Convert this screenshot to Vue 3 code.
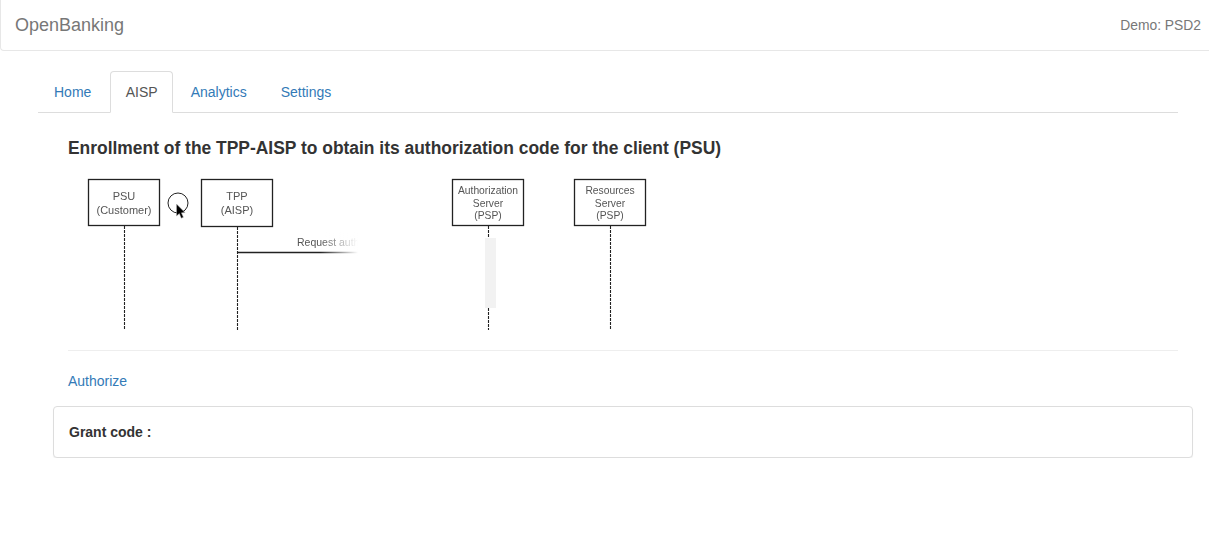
<template>
  <div class="page">
    <nav class="navbar">
      <a class="brand">OpenBanking</a>
      <span class="demo">Demo: PSD2</span>
    </nav>

    <div class="container">
      <ul class="tabs">
        <li v-for="tab in tabs" :key="tab" class="tab" :class="{ active: tab === 'AISP' }">{{ tab }}</li>
      </ul>

      <div class="tab-content">
        <h4 class="title">Enrollment of the TPP-AISP to obtain its authorization code for the client (PSU)</h4>

        <svg class="diagram" width="640" height="175" viewBox="68 165 640 175">
          <defs>
            <linearGradient id="fadeOut" gradientUnits="userSpaceOnUse" x1="320" y1="0" x2="358" y2="0">
              <stop offset="0" stop-color="#fff" stop-opacity="0" />
              <stop offset="1" stop-color="#fff" stop-opacity="1" />
            </linearGradient>
            <clipPath id="reveal">
              <rect x="230" y="230" width="128" height="30" />
            </clipPath>
          </defs>

          <rect x="485" y="238" width="11" height="70" fill="#f2f2f2" />

          <g v-for="line in lifelines" :key="line.x">
            <line
              v-for="(seg, i) in line.segments"
              :key="i"
              class="lifeline"
              :x1="line.x"
              :x2="line.x"
              :y1="seg[0]"
              :y2="seg[1]"
            />
          </g>

          <g v-for="box in boxes" :key="box.x">
            <rect class="box" :x="box.x + 0.5" y="179.5" width="71" :height="box.h" />
            <text
              v-for="row in box.rows"
              :key="row.t"
              class="label"
              :style="{ fontSize: box.size + 'px' }"
              :x="box.x + 36"
              :y="row.y"
              text-anchor="middle"
            >{{ row.t }}</text>
          </g>

          <g clip-path="url(#reveal)">
            <line x1="238" y1="252.5" x2="358" y2="252.5" stroke="#222" stroke-width="1.4" />
            <text class="label" x="297" y="245.5">Request authorization</text>
            <rect x="318" y="232" width="40" height="24" fill="url(#fadeOut)" />
          </g>

          <circle cx="178" cy="203" r="10" fill="#fff" stroke="#222" stroke-width="1" />
          <path
            d="M176.5 204 L176.5 216 L179.3 213.6 L181.3 218.2 L183.4 217.2 L181.4 212.8 L185 212.6 Z"
            fill="#000"
            stroke="#bbb"
            stroke-width="0.5"
          />
        </svg>

        <hr class="rule" />

        <a class="link">Authorize</a>

        <div class="panel">
          <strong>Grant code :</strong>
        </div>
      </div>
    </div>
  </div>
</template>

<script setup>
const tabs = ['Home', 'AISP', 'Analytics', 'Settings']

const boxes = [
  { x: 88, h: 46, size: 11, rows: [{ t: 'PSU', y: 199.5 }, { t: '(Customer)', y: 213.5 }] },
  { x: 201, h: 47, size: 11, rows: [{ t: 'TPP', y: 199.5 }, { t: '(AISP)', y: 213.5 }] },
  { x: 452, h: 46, size: 10.3, rows: [{ t: 'Authorization', y: 193.5 }, { t: 'Server', y: 206.5 }, { t: '(PSP)', y: 218.5 }] },
  { x: 574, h: 46, size: 10.3, rows: [{ t: 'Resources', y: 193.5 }, { t: 'Server', y: 206.5 }, { t: '(PSP)', y: 218.5 }] }
]

const lifelines = [
  { x: 124.5, segments: [[226, 330]] },
  { x: 237.5, segments: [[227, 330]] },
  { x: 488.5, segments: [[226, 238], [308, 330]] },
  { x: 610.5, segments: [[226, 330]] }
]
</script>

<style scoped>
.page {
  font-family: "Liberation Sans", Arial, sans-serif;
  font-size: 14px;
  line-height: 20px;
  color: #333;
}
.navbar {
  display: flex;
  justify-content: space-between;
  align-items: center;
  height: 51px;
  box-sizing: border-box;
  padding: 0 8px 0 14px;
  border: 1px solid #e7e7e7;
  border-top: 0;
  border-right: 0;
  border-radius: 0 0 0 4px;
  background: #fff;
}
.brand {
  font-size: 18px;
  color: #777;
}
.demo {
  font-size: 13.85px;
  color: #777;
}
.container {
  margin: 20px 31px 0 38px;
}
.tabs {
  display: flex;
  list-style: none;
  margin: 0;
  padding: 0;
  height: 41px;
  border-bottom: 1px solid #ddd;
}
.tab {
  padding: 10px 15px;
  margin-right: 2px;
  height: 20px;
  color: #337ab7;
  border: 1px solid transparent;
  border-radius: 4px 4px 0 0;
}
.tab.active {
  margin-left: 0.4px;
  padding-right: 14px;
  color: #555;
  background: #fff;
  border-color: #ddd;
  border-bottom-color: #fff;
}
.tab-content {
  padding-left: 30px;
}
.title {
  margin: 25px 0 0;
  font-size: 17.43px;
  line-height: 20px;
  font-weight: 700;
  color: #333;
}
.diagram {
  display: block;
  margin-top: 7px;
  filter: blur(0.4px);
}
.box {
  fill: #fff;
  stroke: #222;
  stroke-width: 1.3;
}
.lifeline {
  stroke: #222;
  stroke-width: 1.1;
  stroke-dasharray: 3 1;
}
.label {
  font-family: "Liberation Sans", Arial, sans-serif;
  font-size: 10.5px;
  fill: #555;
}
.rule {
  margin: 10px 0 0;
  border: 0;
  border-top: 1px solid #eee;
}
.link {
  display: block;
  margin-top: 20px;
  color: #337ab7;
}
.panel {
  margin: 15px -15px 0;
  padding: 15px;
  height: 20px;
  border: 1px solid #ddd;
  border-radius: 4px;
  background: #fff;
  box-shadow: 0 1px 1px rgba(0, 0, 0, 0.05);
}
</style>
